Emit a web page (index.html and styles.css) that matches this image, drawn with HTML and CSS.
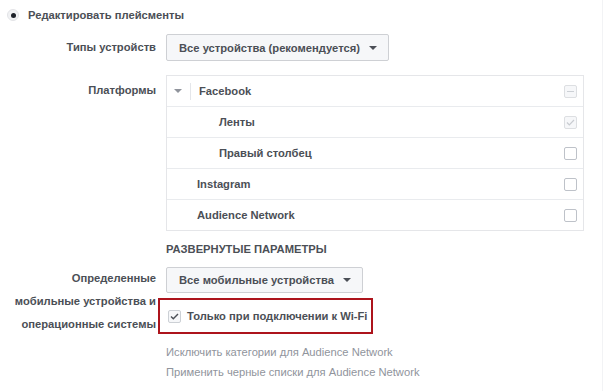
FILE: index.html
```html
<!doctype html>
<html lang="ru">
<head>
	<meta charset="UTF-8">
	<title>Плейсменты</title>
	<link rel="stylesheet" href="styles.css">
</head>
<body>
	<div class="page">
		<div class="head">
			<span class="radio"></span>
			<span class="head-text">Редактировать плейсменты</span>
		</div>

		<div class="row row-devices">
			<div class="label">Типы устройств</div>
			<div class="field">
				<span class="select">Все устройства (рекомендуется) <i class="caret"></i></span>
			</div>
		</div>

		<div class="row row-platforms">
			<div class="label label-platforms">Платформы</div>
			<div class="field">
				<ul class="platforms">
					<li class="item">
						<span class="toggle"><i class="caret caret-light"></i></span>
						<span class="name">Facebook</span>
						<span class="check check-disabled check-mixed"></span>
					</li>
					<li class="item item-sub">
						<span class="name">Ленты</span>
						<span class="check check-disabled check-on">
							<svg width="9" height="7" viewBox="0 0 9 7"><path d="M1 3.5l2.3 2.3L8 1" fill="none" stroke="#c8cbd0" stroke-width="1.2"/></svg>
						</span>
					</li>
					<li class="item item-sub">
						<span class="name">Правый столбец</span>
						<span class="check"></span>
					</li>
					<li class="item">
						<span class="name">Instagram</span>
						<span class="check"></span>
					</li>
					<li class="item">
						<span class="name">Audience Network</span>
						<span class="check"></span>
					</li>
				</ul>
			</div>
		</div>

		<div class="row row-section">
			<div class="label"></div>
			<div class="field section-title">РАЗВЕРНУТЫЕ ПАРАМЕТРЫ</div>
		</div>

		<div class="row row-mobile">
			<div class="label label-multi">Определенные<br>мобильные устройства и<br>операционные системы</div>
			<div class="field">
				<span class="select">Все мобильные устройства <i class="caret"></i></span>
				<div class="highlight">
					<span class="check check-wifi">
						<svg width="9" height="7" viewBox="0 0 9 7"><path d="M1 3.5l2.3 2.3L8 1" fill="none" stroke="#4b4f56" stroke-width="1.4"/></svg>
					</span>
					<span class="wifi-text">Только при подключении к Wi-Fi</span>
				</div>
				<div class="links">
					<a href="javascript:void(0);">Исключить категории для Audience Network</a>
					<a href="javascript:void(0);">Применить черные списки для Audience Network</a>
				</div>
			</div>
		</div>
	</div>
</body>
</html>
```

FILE: styles.css
```css
* {
	box-sizing: border-box;
}
body {
	margin: 0;
	background: #fff;
	font-family: "Liberation Sans", Arial, sans-serif;
	font-size: 11.2px;
	color: #4b4f56;
}
.page {
	height: 391px;
	border-right: 1px solid #f2f3f5;
	margin-right: 1px;
}
.head {
	display: flex;
	align-items: center;
	height: 30px;
	padding-left: 7px;
}
.radio {
	width: 12px;
	height: 12px;
	border-radius: 50%;
	background: #f1f2f4;
	border: 1px solid #e3e4e7;
	display: flex;
	align-items: center;
	justify-content: center;
}
.radio:after {
	content: "";
	width: 5px;
	height: 5px;
	border-radius: 50%;
	background: #1d2129;
}
.head-text {
	margin-left: 9px;
	font-weight: bold;
	color: #4b4f56;
}
.row {
	display: grid;
	grid-template-columns: 156px 418px;
	column-gap: 10px;
}
.label {
	text-align: right;
	font-weight: bold;
	line-height: 27px;
	white-space: nowrap;
}
.row-devices {
	margin-top: 4px;
}
.select {
	display: inline-flex;
	align-items: center;
	gap: 9px;
	height: 27px;
	padding: 0 11px 0 12px;
	background: #f6f7f9;
	border: 1px solid #ced0d4;
	border-radius: 2px;
	font-weight: bold;
	color: #4b4f56;
}
.caret {
	width: 0;
	height: 0;
	border-left: 4px solid transparent;
	border-right: 4px solid transparent;
	border-top: 4px solid #4b4f56;
}
.caret-light {
	border-top-color: #90949c;
}
.row-platforms {
	margin-top: 14px;
}
.label-platforms {
	line-height: 30px;
}
.platforms {
	list-style: none;
	margin: 0;
	padding: 0;
	border: 1px solid #e5e6e9;
}
.item {
	display: flex;
	align-items: center;
	height: 31px;
	padding: 0 6px 0 30px;
	border-top: 1px solid #e9ebee;
	font-weight: bold;
}
.item:first-child {
	height: 30px;
	border-top: 0;
	padding-left: 7px;
}
.item-sub {
	padding-left: 52px;
}
.toggle {
	display: flex;
	align-items: center;
	height: 17px;
	padding-right: 8px;
	margin-right: 8px;
	border-right: 1px solid #e4e6ea;
}
.name {
	flex: 1;
}
.check {
	width: 13px;
	height: 13px;
	border: 1px solid #bec2c9;
	border-radius: 2px;
	background: #fff;
	display: flex;
	align-items: center;
	justify-content: center;
	flex: none;
}
.check-disabled {
	border-color: #dddfe2;
	background: #f6f7f9;
}
.check-mixed:after {
	content: "";
	width: 7px;
	height: 1px;
	background: #ccd0d5;
}
.row-section {
	margin-top: 10px;
}
.section-title {
	font-weight: bold;
	line-height: 16px;
	color: #4b4f56;
}
.row-mobile {
	margin-top: 10px;
}
.label-multi {
	line-height: 23px;
}
.row-mobile .select {
	height: 26px;
}
.highlight {
	display: flex;
	align-items: center;
	width: 215px;
	height: 36px;
	margin: 5px 0 0 -8px;
	padding-left: 8px;
	border: 2px solid #ad141c;
	white-space: nowrap;
}
.check-wifi {
	border-color: #ccd0d5;
	background: #f6f7f9;
	margin-right: 6px;
}
.wifi-text {
	font-weight: bold;
	color: #4b4f56;
}
.links {
	display: flex;
	flex-direction: column;
	margin-top: 8px;
}
.links a {
	line-height: 20px;
	color: #90949c;
	text-decoration: none;
}
```
